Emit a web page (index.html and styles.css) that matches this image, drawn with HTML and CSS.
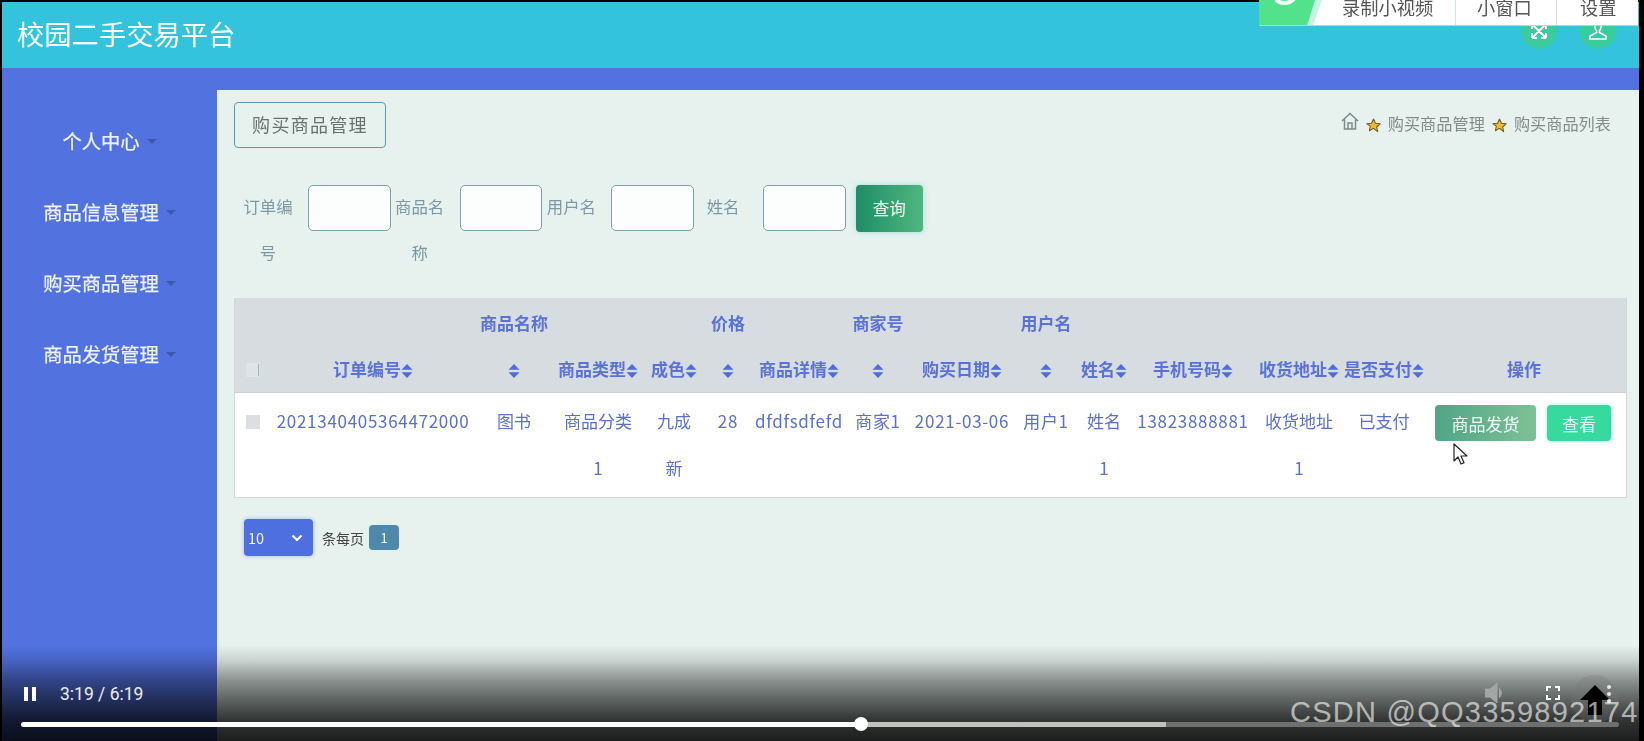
FILE: index.html
```html
<!DOCTYPE html>
<html lang="zh-CN">
<head>
<meta charset="utf-8">
<title>校园二手交易平台</title>
<link rel="stylesheet" href="styles.css">
</head>
<body>
<svg class="defs" width="0" height="0" aria-hidden="true">
  <symbol id="sort" viewBox="0 0 12 14"><path d="M6 0l5.500 5.800H.5zM6 14L.5 8.200h11z"/></symbol>
  <symbol id="star" viewBox="0 0 16 16"><path d="M8 1l2.100 4.600 5 .6-3.700 3.400 1 5L8 11.100l-4.400 2.500 1-5L.9 6.200l5-.6z" fill="#f0b92e" stroke="#6b5a2a" stroke-width="1.100" stroke-linejoin="round"/></symbol>
</svg>
<div class="app">
  <header class="header">
    <h1 class="title">校园二手交易平台</h1>
    <div class="header-icons">
      <span class="circle">
        <svg viewBox="0 0 20 20" width="20" height="20"><path d="M3 3l14 14M17 3L3 17M3 3h5M3 3v5M17 3h-5M17 3v5M3 17h5M3 17v-5M17 17h-5M17 17v-5" fill="none" stroke="#fff" stroke-width="2"/></svg>
      </span>
      <span class="circle">
        <svg viewBox="0 0 20 20" width="20" height="20"><path d="M7 1h6v5c0 2-1 3-1.600 4v1.500L18 15v3H2v-3l6.600-3.500V10C8 9 7 8 7 6z" fill="none" stroke="#fff" stroke-width="1.600"/></svg>
      </span>
    </div>
  </header>
  <div class="layout">
    <nav class="sidebar">
      <a class="nav-item">个人中心<i class="caret"></i></a>
      <a class="nav-item">商品信息管理<i class="caret"></i></a>
      <a class="nav-item">购买商品管理<i class="caret"></i></a>
      <a class="nav-item">商品发货管理<i class="caret"></i></a>
    </nav>
    <main class="main">
      <div class="crumb-row">
        <div class="page-tag">购买商品管理</div>
        <div class="breadcrumb">
          <svg class="home" viewBox="0 0 18 18" width="18" height="18"><path d="M1 9l8-7.500L17 9M3.500 7.500V17h11V7.500M7 17v-6h4v6" fill="none" stroke="#7b8a8a" stroke-width="1.500"/></svg>
          <svg class="star" width="15" height="15"><use href="#star"/></svg>
          <span>购买商品管理</span>
          <svg class="star" width="15" height="15"><use href="#star"/></svg>
          <span>购买商品列表</span>
        </div>
      </div>
      <form class="search">
        <div class="field"><label class="field-label">订单编号</label><span class="input"></span></div>
        <div class="field"><label class="field-label">商品名称</label><span class="input"></span></div>
        <div class="field"><label class="field-label">用户名</label><span class="input"></span></div>
        <div class="field"><label class="field-label">姓名</label><span class="input"></span></div>
        <span class="query">查询</span>
      </form>
      <table class="table">
        <colgroup>
          <col class="c0"><col class="c1"><col class="c2"><col class="c3"><col class="c4"><col class="c5"><col class="c6"><col class="c7"><col class="c8"><col class="c9"><col class="c10"><col class="c11"><col class="c12"><col class="c13"><col class="c14">
        </colgroup>
        <thead>
          <tr>
            <th><span class="line">&nbsp;</span><span class="line"><i class="check head-check"></i></span></th>
            <th><span class="line">&nbsp;</span><span class="line">订单编号<svg class="sort"><use href="#sort"/></svg></span></th>
            <th><span class="line wide">商品名称</span><span class="line"><svg class="sort"><use href="#sort"/></svg></span></th>
            <th><span class="line">&nbsp;</span><span class="line">商品类型<svg class="sort"><use href="#sort"/></svg></span></th>
            <th><span class="line">&nbsp;</span><span class="line">成色<svg class="sort"><use href="#sort"/></svg></span></th>
            <th><span class="line wide">价格</span><span class="line"><svg class="sort"><use href="#sort"/></svg></span></th>
            <th><span class="line">&nbsp;</span><span class="line">商品详情<svg class="sort"><use href="#sort"/></svg></span></th>
            <th><span class="line wide">商家号</span><span class="line"><svg class="sort"><use href="#sort"/></svg></span></th>
            <th><span class="line">&nbsp;</span><span class="line">购买日期<svg class="sort"><use href="#sort"/></svg></span></th>
            <th><span class="line wide">用户名</span><span class="line"><svg class="sort"><use href="#sort"/></svg></span></th>
            <th><span class="line">&nbsp;</span><span class="line">姓名<svg class="sort"><use href="#sort"/></svg></span></th>
            <th><span class="line">&nbsp;</span><span class="line">手机号码<svg class="sort"><use href="#sort"/></svg></span></th>
            <th><span class="line">&nbsp;</span><span class="line">收货地址<svg class="sort"><use href="#sort"/></svg></span></th>
            <th><span class="line">&nbsp;</span><span class="line">是否支付<svg class="sort"><use href="#sort"/></svg></span></th>
            <th class="op-head"><span class="line">&nbsp;</span><span class="line">操作</span></th>
          </tr>
        </thead>
        <tbody>
          <tr>
            <td><span class="line"><i class="check"></i></span><span class="line">&nbsp;</span></td>
            <td><span class="line num">2021340405364472000</span></td>
            <td><span class="line">图书</span></td>
            <td><span class="line">商品分类</span><span class="line">1</span></td>
            <td><span class="line">九成</span><span class="line">新</span></td>
            <td><span class="line num">28</span></td>
            <td><span class="line num">dfdfsdfefd</span></td>
            <td><span class="line num">商家1</span></td>
            <td><span class="line num">2021-03-06</span></td>
            <td><span class="line num">用户1</span></td>
            <td><span class="line">姓名</span><span class="line">1</span></td>
            <td><span class="line num">13823888881</span></td>
            <td><span class="line">收货地址</span><span class="line">1</span></td>
            <td><span class="line">已支付</span></td>
            <td class="ops"><div class="op-row"><span class="btn btn-ship">商品发货</span><span class="btn btn-view">查看</span></div></td>
          </tr>
        </tbody>
      </table>
      <div class="pager">
        <div class="page-select">10<svg viewBox="0 0 12 8" width="12" height="8"><path d="M1.500 1.500L6 6l4.500-4.500" fill="none" stroke="#fff" stroke-width="2.200"/></svg></div>
        <span class="page-text">条每页</span>
        <span class="page-num">1</span>
      </div>
    </main>
  </div>
</div>

<div class="recorder">
  <div class="rec-logo"><div class="rec-green"><i class="rec-ring"></i></div></div>
  <span class="rec-item rec-a">录制小视频</span>
  <span class="rec-item rec-b">小窗口</span>
  <span class="rec-item rec-c">设置</span>
</div>

<svg class="cursor" viewBox="0 0 15 23" width="15" height="23"><path d="M1 1v17l4-4 3 7 3-1.300-3-6.700h6z" fill="#fff" stroke="#222" stroke-width="1.200" stroke-linejoin="round"/></svg>

<div class="video">
  <div class="video-row">
    <div class="pause"><i></i><i></i></div>
    <span class="time">3:19 / 6:19</span>
    <svg class="volume" viewBox="0 0 19 20" width="19" height="20"><path d="M0 6h5l7-6v20l-7-6H0zM14 5c3 2.500 3 7.500 0 10" fill="#a3a6a4" stroke="#a3a6a4"/></svg>
    <svg class="fullscreen" viewBox="0 0 14 14" width="14" height="14"><path d="M1 5V1h4M9 1h4v4M13 9v4H9M5 13H1V9" fill="none" stroke="#fff" stroke-width="2"/></svg>
    <div class="upload">
      <svg viewBox="0 0 30 30" width="30" height="30"><path d="M15 0L30 15H22V30H8V15H0z" fill="#000"/></svg>
    </div>
    <div class="dots"><i></i><i></i><i></i></div>
  </div>
  <div class="progress">
    <div class="played"></div>
    <div class="buffered"></div>
    <div class="rest"></div>
    <i class="thumb"></i>
  </div>
  <span class="watermark">CSDN @QQ3359892174</span>
</div>
</body>
</html>
```

FILE: styles.css
```css
* { box-sizing: border-box; }
html, body { margin: 0; height: 741px; overflow: hidden; }
body {
  background: #000;
  padding: 2px 5px 0 2px;
  position: relative;
  font-family: "Noto Sans CJK SC", "Liberation Sans", sans-serif;
}
.defs { position: absolute; }
.app { height: 739px; display: flex; flex-direction: column; background: #5272e0; filter: blur(0.35px); }

.header {
  height: 66px;
  flex: none;
  background: #33c3dd;
  display: flex;
  align-items: center;
  justify-content: space-between;
  padding: 0 22px 0 15px;
}
.title { margin: 0 0 4px; color: #fff; font-size: 27.3px; font-weight: 400; line-height: 62px; }
.header-icons { display: flex; gap: 23px; margin-top: -8px; margin-right: 1px; }
.circle {
  width: 36px; height: 36px; border-radius: 50%;
  background: #3acb9e;
  display: flex; align-items: center; justify-content: center;
}

.layout { flex: 1; display: flex; min-height: 0; }
.sidebar { width: 215px; flex: none; padding-top: 38px; }
.nav-item {
  height: 71px;
  display: flex; align-items: center; justify-content: center;
  color: #eef2ff; font-size: 19.3px; line-height: 71px;
  -webkit-text-stroke: .25px #eef2ff;
}
.caret {
  margin-left: 7px;
  border: 5px solid transparent; border-top: 5px solid #3f58ad; border-bottom: 0;
  width: 0; height: 0;
}

.main { flex: 1; margin-top: 22px; background: #e7f2ee; padding: 12px 14px 0 17px; min-width: 0; }
.crumb-row { display: flex; justify-content: space-between; align-items: center; height: 46px; }
.page-tag {
  width: 152px; height: 46px; padding-bottom: 2px;
  border: 1.5px solid #5f99ae; border-radius: 4px;
  color: #6b6f6f; font-size: 18px; letter-spacing: 1.3px;
  display: flex; align-items: center; justify-content: center;
}
.breadcrumb { display: flex; align-items: center; color: #858b8b; font-size: 16.2px; padding-right: 14px; margin-top: -4px; }
.home { margin-right: 7px; margin-top: -4px; }
.star { margin-right: 7px; margin-top: 5px; }
.breadcrumb span + .star { margin-left: 7px; }

.search { display: flex; margin-top: 37px; padding-left: 9px; height: 113px; align-items: flex-start; }
.field { display: flex; width: 151.7px; flex: none; align-items: flex-start; }
.field-label {
  width: 50px; margin-right: 15px; flex: none; margin-top: -2px;
  color: #7d98a5; font-size: 16.4px; line-height: 46px; text-align: center;
}
.input {
  width: 82.5px; height: 46px; flex: none;
  background: #fbfefd; border: 1.5px solid #7ba0b2; border-radius: 5px;
}
.query {
  width: 67px; height: 47px; margin-left: 6px; flex: none; padding-bottom: 2px;
  background: linear-gradient(90deg, #1f8d68, #4fb67d);
  border-radius: 4px; box-shadow: 0 0 6px #9fe0dc;
  color: #f2fff6; font-size: 16.6px; display: flex; align-items: center; justify-content: center;
}

.table {
  width: 1391px; table-layout: fixed; border-collapse: separate; border-spacing: 0;
  color: #5a70cf; font-size: 17px;
  border: 1px solid #d2d7d7; border-top: 0;
  background: #fff;
}
.table th { background: #d6dce0; padding: 2px 0 0; font-weight: 700; color: #5a72d8; border-bottom: 1px solid #cdd2d5; vertical-align: top; }
.table td { padding: 5px 0 6px; text-align: center; vertical-align: top; }
.line { display: block; height: 46px; line-height: 46px; white-space: nowrap; text-align: center; position: relative; }
.table td .line + .line { margin-top: 1px; }
.wide { margin: 0 -20px; }
.num { letter-spacing: .7px; margin: 0 -12px; }
.sort { width: 12px; height: 14px; fill: #4f6cd8; vertical-align: -2px; }
.check { display: inline-block; width: 14px; height: 14px; background: #dcdee2; vertical-align: middle; margin-top: -3px; }
.head-check { background: #dfe3e6; position: relative; }
.head-check::after { content: ""; position: absolute; left: 12px; top: 1px; width: 1px; height: 12px; background: #8cc0a4; }
.c0 { width: 35px; } .c1 { width: 206px; } .c2 { width: 76px; } .c3 { width: 92px; } .c4 { width: 60px; }
.c5 { width: 48px; } .c6 { width: 94px; } .c7 { width: 64px; } .c8 { width: 104px; } .c9 { width: 64px; }
.c10 { width: 52px; } .c11 { width: 126px; } .c12 { width: 86px; } .c13 { width: 84px; } .c14 { width: 200px; }
.op-head { padding-right: 4px !important; }
.table td.ops { text-align: left; padding: 12px 0 0; }
.op-row { display: flex; gap: 11px; padding-left: 9px; }
.btn {
  height: 36px; display: flex; align-items: center; justify-content: center;
  color: #f0fff8; font-size: 17px; border-radius: 4px;
}
.btn-ship { width: 101px; background: linear-gradient(90deg, #4fa586, #7fc096); }
.btn-view { width: 64px; background: #36d99e; box-shadow: 0 0 5px #a8f0e4; }

.pager { display: flex; align-items: center; margin-top: 21px; padding-left: 10px; }
.page-select {
  width: 69px; height: 37px; border-radius: 4px;
  background: #4d6fe0; box-shadow: 0 0 4px #9db4f0;
  color: #f3f6ff; font-size: 14.5px; padding: 0 10px 0 4px;
  display: flex; align-items: center; justify-content: space-between;
}
.page-text { margin-left: 9px; font-size: 14px; color: #444; }
.page-num {
  margin-left: 5px; width: 30px; height: 25px; border-radius: 4px;
  background: #4e89ab; color: #f4fbff; font-size: 13px;
  display: flex; align-items: center; justify-content: center;
}

.recorder {
  position: absolute; left: 1259px; top: 0; width: 379px; height: 26px;
  background: #fff; border-bottom: 1px solid #c9cdcc; overflow: hidden;
  color: #555; font-size: 18.3px; filter: blur(0.4px);
}
.rec-logo {
  position: absolute; left: 0; top: 0; width: 63px; height: 25px;
  background: #c6f5e4;
  clip-path: polygon(0 0, 100% 0, 86% 100%, 0 100%);
}
.rec-green {
  position: absolute; left: 0; top: 0; width: 56px; height: 25px;
  background: #52e28c;
  clip-path: polygon(0 0, 100% 0, 86% 100%, 0 100%);
}
.rec-ring {
  position: absolute; left: 12px; top: -19px; width: 27px; height: 24px;
  border: 4px solid #fff; border-radius: 50%; border-left-color: transparent;
}
.rec-item { position: absolute; top: -6px; line-height: 26px; white-space: nowrap; }
.rec-a { left: 83px; width: 114px; height: 40px; border-right: 1px solid #d3e6dc; }
.rec-b { left: 198px; padding-left: 20px; width: 100px; height: 40px; border-right: 1px solid #ddd; }
.rec-c { left: 321px; }

.cursor { position: absolute; left: 1453px; top: 443px; }

.video {
  position: absolute; left: 2px; right: 5px; top: 645px; height: 96px;
  background: linear-gradient(180deg,
    rgba(0,0,0,0) 0,
    rgba(0,0,0,.13) 16%,
    rgba(0,0,0,.4) 37%,
    rgba(0,0,0,.6) 58%,
    rgba(0,0,0,.78) 78%,
    rgba(0,0,0,.88) 100%);
  overflow: hidden;
}
.video-row { position: absolute; left: 0; right: 0; top: 36px; height: 30px; }
.pause { position: absolute; left: 22px; top: 6px; display: flex; gap: 4px; }
.pause i { width: 4px; height: 14px; background: #fff; display: block; }
.time { position: absolute; left: 58px; top: 1px; line-height: 24px; color: #eceef2; font-family: Roboto, sans-serif; font-size: 17.5px; }
.volume { position: absolute; left: 1483px; top: 2px; }
.fullscreen { position: absolute; left: 1544px; top: 5px; }
.upload {
  position: absolute; left: 1569px; top: -6px; width: 48px; height: 48px;
  border-radius: 50%; background: rgba(120,120,120,.25);
  display: flex; justify-content: center; padding-top: 10px;
}
.dots { position: absolute; left: 1605px; top: 4px; display: flex; flex-direction: column; gap: 3px; }
.dots i { width: 4px; height: 4px; border-radius: 50%; background: #e8e8e8; display: block; }
.progress { position: absolute; left: 19px; top: 77px; width: 1598px; height: 5px; display: flex; }
.played { width: 840px; background: #fff; border-radius: 3px 0 0 3px; }
.buffered { width: 305px; background: #c0c2c0; }
.rest { flex: 1; background: #6e706e; border-radius: 0 3px 3px 0; }
.thumb { position: absolute; left: 833px; top: -5px; width: 14px; height: 14px; border-radius: 50%; background: #fff; }
.watermark {
  position: absolute; left: 1288px; top: 49px; white-space: nowrap;
  color: rgba(255,255,255,.62); font-family: "Liberation Sans", sans-serif; font-size: 29px; letter-spacing: 1.25px;
  line-height: 36px;
}
```
